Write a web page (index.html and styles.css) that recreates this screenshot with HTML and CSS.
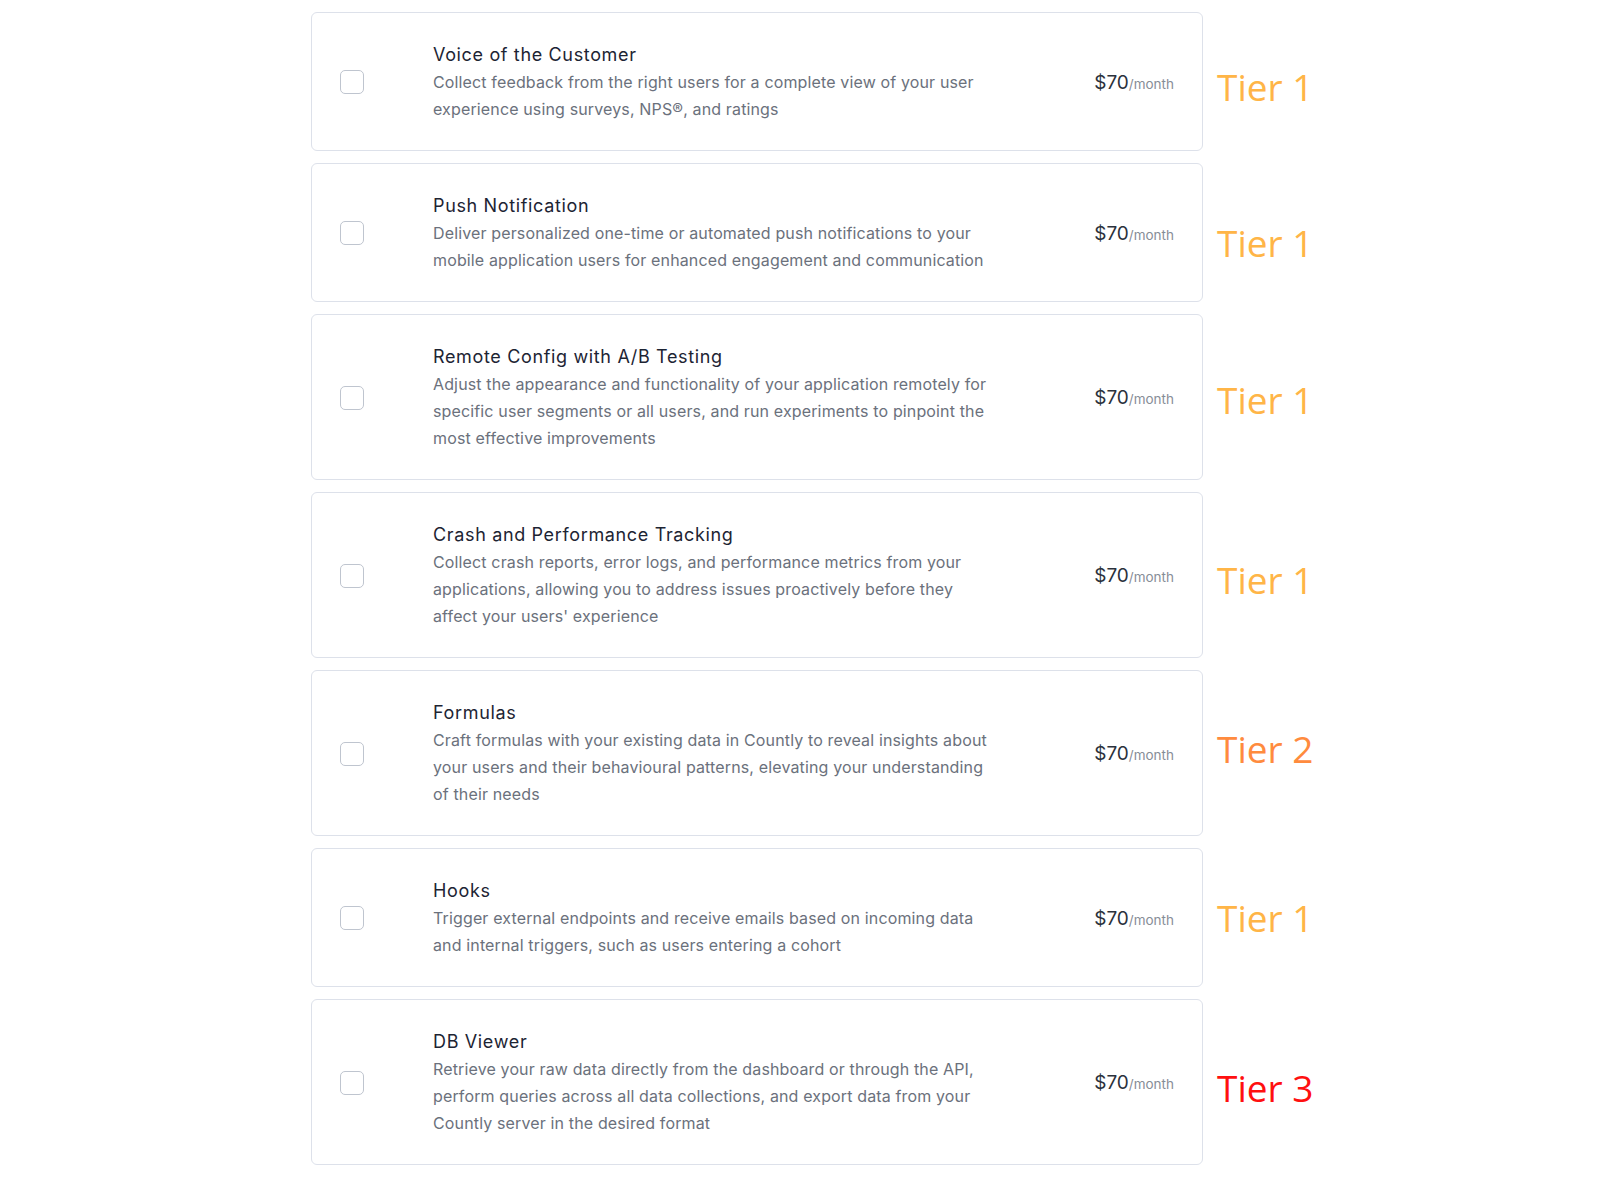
FILE: index.html
```html
<!DOCTYPE html>
<html lang="en">
<head>
<meta charset="utf-8">
<title>Add-ons</title>
<link rel="stylesheet" href="styles.css">
</head>
<body>
<main class="list">
  <div class="row">
    <div class="card">
      <span class="checkbox"></span>
      <div class="info">
        <div class="title">Voice of the Customer</div>
        <div class="desc">Collect feedback from the right users for a complete view of your user experience using surveys, NPS®, and ratings</div>
      </div>
      <div class="price"><span class="amount">$70</span><span class="per">/month</span></div>
    </div>
    <div class="tier tier-1 nudge-5">Tier 1</div>
  </div>
  <div class="row">
    <div class="card">
      <span class="checkbox"></span>
      <div class="info">
        <div class="title">Push Notification</div>
        <div class="desc">Deliver personalized one-time or automated push notifications to your mobile application users for enhanced engagement and communication</div>
      </div>
      <div class="price"><span class="amount">$70</span><span class="per">/month</span></div>
    </div>
    <div class="tier tier-1 nudge-10">Tier 1</div>
  </div>
  <div class="row">
    <div class="card">
      <span class="checkbox"></span>
      <div class="info">
        <div class="title">Remote Config with A/B Testing</div>
        <div class="desc">Adjust the appearance and functionality of your application remotely for specific user segments or all users, and run experiments to pinpoint the most effective improvements</div>
      </div>
      <div class="price"><span class="amount">$70</span><span class="per">/month</span></div>
    </div>
    <div class="tier tier-1 nudge-3">Tier 1</div>
  </div>
  <div class="row">
    <div class="card">
      <span class="checkbox"></span>
      <div class="info">
        <div class="title">Crash and Performance Tracking</div>
        <div class="desc">Collect crash reports, error logs, and performance metrics from your applications, allowing you to address issues proactively before they affect your users' experience</div>
      </div>
      <div class="price"><span class="amount">$70</span><span class="per">/month</span></div>
    </div>
    <div class="tier tier-1 nudge-5">Tier 1</div>
  </div>
  <div class="row">
    <div class="card">
      <span class="checkbox"></span>
      <div class="info">
        <div class="title">Formulas</div>
        <div class="desc">Craft formulas with your existing data in Countly to reveal insights about your users and their behavioural patterns, elevating your understanding of their needs</div>
      </div>
      <div class="price"><span class="amount">$70</span><span class="per">/month</span></div>
    </div>
    <div class="tier tier-2 nudge-up-4">Tier 2</div>
  </div>
  <div class="row">
    <div class="card">
      <span class="checkbox"></span>
      <div class="info">
        <div class="title">Hooks</div>
        <div class="desc">Trigger external endpoints and receive emails based on incoming data and internal triggers, such as users entering a cohort</div>
      </div>
      <div class="price"><span class="amount">$70</span><span class="per">/month</span></div>
    </div>
    <div class="tier tier-1">Tier 1</div>
  </div>
  <div class="row">
    <div class="card">
      <span class="checkbox"></span>
      <div class="info">
        <div class="title">DB Viewer</div>
        <div class="desc">Retrieve your raw data directly from the dashboard or through the API, perform queries across all data collections, and export data from your Countly server in the desired format</div>
      </div>
      <div class="price"><span class="amount">$70</span><span class="per">/month</span></div>
    </div>
    <div class="tier tier-3 nudge-6">Tier 3</div>
  </div>
</main>
</body>
</html>
```

FILE: styles.css
```css
html, body {
  margin: 0;
  padding: 0;
  background: #ffffff;
}

body {
  font-family: Inter, "Noto Sans", "Liberation Sans", sans-serif;
}

.list {
  display: flex;
  flex-direction: column;
  gap: 12px;
  padding: 12px 0 0 311px;
}

.row {
  display: flex;
  align-items: stretch;
  gap: 14px;
}

.card {
  box-sizing: border-box;
  width: 892px;
  border: 1px solid #dde1ea;
  border-radius: 6px;
  padding: 28px 28px 27px 28px;
  display: grid;
  grid-template-columns: 24px 562px 1fr;
  column-gap: 69px;
  align-items: center;
}

.checkbox {
  box-sizing: border-box;
  width: 24px;
  height: 24px;
  border: 1px solid #bfc5cf;
  border-radius: 5px;
  background: #fff;
}

.info {
  display: flex;
  flex-direction: column;
}

.title {
  font-size: 18px;
  letter-spacing: 0.65px;
  line-height: 28px;
  color: #1d2433;
  font-weight: 400;
}

.desc {
  font-size: 16px;
  letter-spacing: 0.14px;
  line-height: 27px;
  color: #6b717c;
}

.price {
  justify-self: end;
  white-space: nowrap;
}

.amount {
  font-size: 19px;
  color: #2b313c;
}

.per {
  font-size: 13.5px;
  color: #878d97;
}

.tier {
  display: flex;
  align-items: center;
  font-family: "Open Sans", "Noto Sans", sans-serif;
  font-size: 37px;
  line-height: 40px;
}

.tier-1 { color: #ffb547; }
.tier-2 { color: #ff8b3e; }
.tier-3 { color: #ff1010; }

.nudge-3 { padding-top: 6px; }
.nudge-5 { padding-top: 10px; }
.nudge-6 { padding-top: 12px; }
.nudge-10 { padding-top: 20px; }
.nudge-up-4 { padding-bottom: 8px; }
```
